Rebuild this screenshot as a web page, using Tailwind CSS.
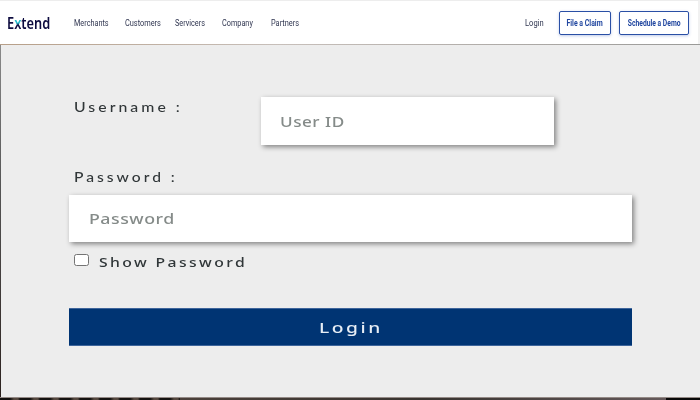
<!DOCTYPE html>
<html lang="en">
<head>
<meta charset="utf-8">
<title>Extend Login</title>
<script src="https://cdn.jsdelivr.net/npm/@tailwindcss/browser@4"></script>
</head>
<body class="w-[700px] h-[400px] overflow-hidden bg-white font-['Noto_Sans',sans-serif] whitespace-nowrap flex flex-col">
<header class="h-[44px] shrink-0 flex items-center bg-white border-t border-[#ededed] border-r-2 border-r-[#f1f1f1] pl-[7.4px] pr-[9px] pt-px text-[#2f3550]">
  <a class="w-[66.6px] text-[16px] leading-[20px] font-semibold text-[#0d0b3f]"><span class="inline-block origin-left scale-x-[0.8]">E<span class="bg-linear-to-b from-[#23bccb] from-50% to-[#0d0b3f] to-60% bg-clip-text text-transparent">x</span>tend</span></a>
  <nav class="flex flex-1 font-['Roboto',sans-serif] text-[9px] leading-[12px]">
    <a class="w-[51px]"><span class="inline-block origin-left scale-x-[0.81]">Merchants</span></a>
    <a class="w-[50.5px]"><span class="inline-block origin-left scale-x-[0.82]">Customers</span></a>
    <a class="w-[46.5px]"><span class="inline-block origin-left scale-x-[0.81]">Servicers</span></a>
    <a class="w-[49px]"><span class="inline-block origin-left scale-x-[0.81]">Company</span></a>
    <a><span class="inline-block origin-left scale-x-[0.82]">Partners</span></a>
  </nav>
  <div class="flex items-center font-['Roboto',sans-serif] text-[9px] leading-[12px]">
    <a class="w-[34px]"><span class="inline-block origin-left scale-x-[0.84]">Login</span></a>
    <a class="w-[52px] h-[24px] flex items-center justify-center border border-[#2a4fa5] rounded-[2px] shadow-[0_1px_3px_rgba(40,80,180,0.3)] text-[9px] font-bold text-[#1f459f]"><span class="scale-x-[0.77]">File a Claim</span></a>
    <a class="ml-2 w-[70px] h-[24px] flex items-center justify-center border border-[#2a4fa5] rounded-[2px] shadow-[0_1px_3px_rgba(40,80,180,0.3)] text-[9px] font-bold text-[#1f459f]"><span class="scale-x-[0.75]">Schedule a Demo</span></a>
  </div>
</header>
<div class="flex-1 flex flex-col bg-linear-to-b from-[#8b8b8b] via-[#555] via-40% to-[#2b211e] pl-px">
  <div class="h-px shrink-0 -ml-px bg-linear-to-r from-[#b79f88] via-[#c7bfba] via-40% to-[#9a9a98]"></div>
  <main class="flex-1 bg-[#ededed] pl-[68px] pt-[52px] text-[#303638]">
    <div class="flex h-[48px]">
      <label class="w-[192px] pl-[4.5px] pt-[3px] font-['Lato',sans-serif] text-[12.5px] leading-[16px] font-medium tracking-[2.4px]"><span class="inline-block origin-left scale-x-[1.265]">Username :</span></label>
      <div class="w-[293px] h-[48px] bg-white shadow-[2px_2px_5px_rgba(0,0,0,0.45)] flex items-center pl-[19px] pt-[3px] text-[13.5px] font-medium tracking-[0.4px] text-[#858b89]"><span class="origin-left scale-x-[1.27]">User ID</span></div>
    </div>
    <label class="block pl-[4.5px] mt-[25px] font-['Lato',sans-serif] text-[12.5px] leading-[16px] font-medium tracking-[2.4px]"><span class="inline-block origin-left scale-x-[1.25]">Password :</span></label>
    <div class="mt-[9px] w-[563px] h-[47px] bg-white shadow-[2px_2px_5px_rgba(0,0,0,0.45)] flex items-center pl-[20px] pt-[2px] text-[13.5px] font-medium tracking-[0.4px] text-[#858b89]"><span class="origin-left scale-x-[1.315]">Password</span></div>
    <label class="flex mt-[13px] pl-[5px] h-[16px] items-center text-[12.5px] leading-[16px] font-medium tracking-[1.9px]">
      <span class="w-[15px] h-[12px] mr-[10px] -mt-[6px] rounded-[2.5px] border border-[#747474] bg-white"></span>
      <span class="origin-left scale-x-[1.26]">Show Password</span>
    </label>
    <button class="mt-[37px] w-[563px] h-[38px] bg-[#003473] border-y border-[#3e659b] flex items-center justify-center text-[15px] font-medium tracking-[2px] text-[#e6edf5]"><span class="scale-x-[1.28]">Login</span></button>
  </main>
  <div class="h-[3px] shrink-0 -ml-px border-t border-[#948a86] flex">
    <div class="w-[180px] bg-[repeating-linear-gradient(90deg,#141210_0_10px,#55483f_14px_18px,#141210_20px)]"></div>
    <div class="flex-1 bg-linear-to-r from-[#4b403a] via-[#38332f] to-[#65595a]"></div>
    <div class="w-[34px] bg-[#080808]"></div>
  </div>
</div>
</body>
</html>
